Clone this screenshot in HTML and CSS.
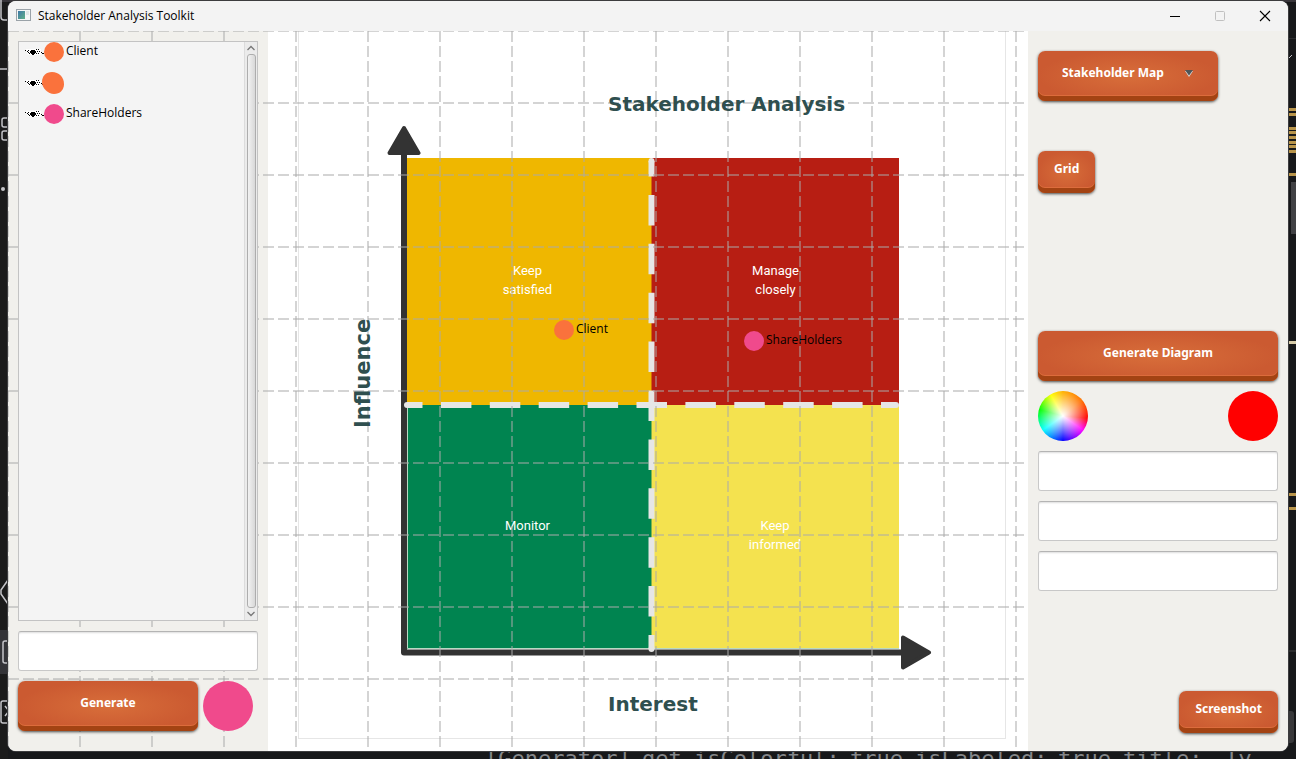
FILE: index.html
```html
<!DOCTYPE html>
<html lang="en">
<head>
<meta charset="utf-8">
<title>Stakeholder Analysis Toolkit</title>
<link rel="stylesheet" href="styles.css">
</head>
<body>
<svg class="backdrop" width="100%" height="100%" aria-hidden="true">
  <rect width="100%" height="100%" fill="#17181a"/>
  <rect width="8" height="100%" fill="#1b1b1b"/>
  <rect width="100%" height="2" fill="#38353a"/>
  <g fill="none" stroke="#c4c4c8" stroke-width="1.5">
    <path d="M1 0V17Q1 20 4 20H8M0 69H8"/>
    <rect x="2" y="118" width="9" height="9" rx="2"/>
    <rect x="2" y="131" width="9" height="9" rx="2"/>
    <path d="M8 580L1 590V594L8 604"/>
  </g>
  <circle cx="3" cy="189" r="2" fill="#c4c4c8"/>
  <rect y="630" width="8" height="44" fill="#343438"/>
  <g fill="none" stroke="#c4c4c8" stroke-width="1.5">
    <rect x="3" y="641" width="9" height="22" rx="2"/>
    <rect x="1" y="701" width="12" height="22" rx="2"/>
    <path d="M5 706L9 711L5 716"/>
  </g>
  <svg x="100%" overflow="visible">
    <g fill="#b8944a">
      <path d="M-8 108h8v3h-8zM-8 113h8v3h-8zM-8 127h8v3h-8zM-8 131h8v3h-8zM-8 136h8v3h-8zM-8 141h8v3h-8zM-8 145h8v3h-8zM-8 150h8v3h-8zM-8 173h8v3h-8zM-8 493h8v3h-8zM-8 507h8v3h-8z"/>
    </g>
    <path d="M-8 341h8v3h-8z" fill="#d6cba8"/>
    <path d="M-5 182h5v52h-5z" fill="#414144"/>
    <path d="M-8 38h8v1h-8zM-8 650h8v2h-8z" fill="#2c2c2e"/>
    <rect x="-10" y="711" width="8" height="32" rx="3" fill="#38383a"/>
    <path d="M-8 57l1 1l3-3" fill="none" stroke="#c4c4c8"/>
  </svg>
  <g class="console">
    <text x="485" y="766">[Generator]</text>
    <text x="642" y="766">get</text>
    <text x="694" y="766">isColorful:</text>
    <text x="850" y="766">true</text>
    <text x="915" y="766">isLabeled:</text>
    <text x="1058" y="766">true</text>
    <text x="1123" y="766">title:</text>
    <text x="1225" y="766">Ty</text>
  </g>
</svg>

<main class="window">
  <header class="titlebar">
    <svg class="app-icon" width="16" height="12" viewBox="0 0 16 12" aria-hidden="true">
      <defs><linearGradient id="appTint" x1="0" y1="0" x2="1" y2="1"><stop offset="0" stop-color="#3f78a8"/><stop offset="1" stop-color="#5fb087"/></linearGradient></defs>
      <rect x=".5" y=".5" width="14" height="11" fill="#f4f6f6" stroke="#9aa2a8"/>
      <rect x="2" y="2" width="7" height="8" fill="url(#appTint)"/>
      <rect x="10" y="2" width="3" height="4" fill="#dfe6e6"/>
    </svg>
    <h1 class="window-title">Stakeholder Analysis Toolkit</h1>
    <div class="window-buttons">
      <button class="window-button" aria-label="Minimize"><svg width="12" height="12" viewBox="0 0 12 12"><path d="M1 6.5H11" stroke="#000"/></svg></button>
      <button class="window-button" aria-label="Maximize" disabled><svg width="12" height="12" viewBox="0 0 12 12"><rect x="1.5" y="1.5" width="9" height="9" rx="1" fill="none" stroke="#c0c0c0"/></svg></button>
      <button class="window-button" aria-label="Close"><svg width="12" height="12" viewBox="0 0 12 12"><path d="M1 1L11 11M11 1L1 11" stroke="#000" stroke-width="1.1"/></svg></button>
    </div>
  </header>

  <div class="workspace">
    <svg class="grid-lines" width="100%" height="100%" aria-hidden="true">
      <g class="grid-h">
        <line x2="100%" y1="0" y2="0"/><line x2="100%" y1="72" y2="72"/><line x2="100%" y1="144" y2="144"/><line x2="100%" y1="216" y2="216"/><line x2="100%" y1="288" y2="288"/><line x2="100%" y1="360" y2="360"/><line x2="100%" y1="432" y2="432"/><line x2="100%" y1="504" y2="504"/><line x2="100%" y1="576" y2="576"/><line x2="100%" y1="648" y2="648"/>
      </g>
      <g class="grid-v">
        <line y2="100%" x1="0" x2="0"/><line y2="100%" x1="72" x2="72"/><line y2="100%" x1="144" x2="144"/><line y2="100%" x1="216" x2="216"/><line y2="100%" x1="288" x2="288"/><line y2="100%" x1="360" x2="360"/><line y2="100%" x1="432" x2="432"/><line y2="100%" x1="504" x2="504"/><line y2="100%" x1="576" x2="576"/><line y2="100%" x1="648" x2="648"/><line y2="100%" x1="720" x2="720"/><line y2="100%" x1="792" x2="792"/><line y2="100%" x1="864" x2="864"/><line y2="100%" x1="936" x2="936"/><line y2="100%" x1="1008" x2="1008"/>
      </g>
    </svg>

    <aside class="panel panel-left">
      <div class="list">
        <svg width="0" height="0" class="symbols" aria-hidden="true">
          <symbol id="eye" viewBox="0 0 19 10">
            <path fill="#fff" d="M1 2h15v6H3z"/>
            <path fill="#000" d="M0 3h1v1H0zM2 4h1v1H2zM3 3h1v1H3zM3 5h1v1H3zM4 6h1v1H4zM5 4h1v2H5zM6 3h4v4H6zM7 7h2v1H7zM10 4h1v2h-1zM11 2h1v1h-1zM12 4h1v1h-1zM11 6h1v1h-1zM13 2h1v1h-1zM13 6h1v1h-1zM14 4h1v1h-1zM16 5h1v1h-1zM17 6h2v1h-2z"/>
          </symbol>
        </svg>
        <ul class="items">
          <li class="item"><svg class="eye"><use href="#eye"/></svg><span class="dot orange"></span><span>Client</span></li>
          <li class="item"><svg class="eye"><use href="#eye"/></svg><svg class="blob" viewBox="0 0 22 22"><path d="M10 0C17 0 22 5 22 12C22 18 18 22 12 22C6 22 0 16 0 10C0 4 4 0 10 0Z" fill="#fa723c"/></svg></li>
          <li class="item"><svg class="eye"><use href="#eye"/></svg><span class="dot pink"></span><span>ShareHolders</span></li>
        </ul>
        <div class="scrollbar">
          <svg width="10" height="12" viewBox="0 0 10 12"><path d="M1.500 8L5 4.500L8.500 8" fill="none" stroke="#777" stroke-width="1.3"/></svg>
          <div class="thumb"></div>
          <svg width="10" height="12" viewBox="0 0 10 12"><path d="M1.500 4L5 7.500L8.500 4" fill="none" stroke="#777" stroke-width="1.3"/></svg>
        </div>
      </div>
      <input class="field" type="text" aria-label="Stakeholder name">
      <div class="generate-row">
        <button class="button button-tall button-generate">Generate</button>
        <span class="swatch pink"></span>
      </div>
    </aside>

    <section class="canvas" aria-label="Diagram">
      <svg class="diagram" viewBox="0 0 760 720">
        <rect x="30.500" y="-.5" width="707" height="708" fill="none" stroke="#e6e6e6"/>
        <rect x="139" y="127" width="245" height="247" fill="#efb700"/>
        <rect x="383.500" y="127" width="247.500" height="247" fill="#b71e13"/>
        <rect x="139" y="374" width="245" height="244" fill="#008450"/>
        <rect x="383.500" y="374" width="247.500" height="244" fill="#f4e24f"/>
        <path d="M139.500 377V617.500H631" fill="none" stroke="#b9d9c4"/>
        <path d="M136 115V621.500H640" fill="none" stroke="#333" stroke-width="6" stroke-linejoin="round"/>
        <path d="M136 97L150.500 122H121.500ZM661 621.500L635 606.500V636.500Z" fill="#333" stroke="#333" stroke-width="4" stroke-linejoin="round"/>
        <g stroke="#e6e6e6" stroke-width="6" stroke-dasharray="30.500 18.400" stroke-dashoffset="12">
          <path d="M383.500 130V618" stroke-dashoffset="15"/>
          <path d="M139 374H628" stroke-dashoffset="15"/>
        </g>
        <g fill="#e6e6e6"><circle cx="139" cy="374" r="3"/><circle cx="628" cy="374" r="3"/><circle cx="383.500" cy="130" r="3"/><circle cx="383.500" cy="618" r="3"/></g>
        <g class="quadrant-label">
          <text x="259.500" y="244">Keep</text><text x="259.500" y="263">satisfied</text>
          <text x="507.500" y="244">Manage</text><text x="507.500" y="263">closely</text>
          <text x="259.500" y="499">Monitor</text>
          <text x="507" y="499">Keep</text><text x="507" y="518">informed</text>
        </g>
      </svg>
      <svg class="diagram diagram-top" viewBox="0 0 760 720">
        <g class="axis-label">
          <text x="340" y="80">Stakeholder Analysis</text>
          <text x="340" y="680">Interest</text>
          <text class="axis-vertical" transform="translate(102 397) rotate(-90)">Influence</text>
        </g>
        <circle cx="296" cy="299" r="10" fill="#fa723c"/>
        <circle cx="486" cy="310" r="10" fill="#f04a8c"/>
        <g class="marker-label">
          <text x="308" y="302">Client</text>
          <text x="498" y="313">ShareHolders</text>
        </g>
      </svg>
    </section>

    <aside class="panel panel-right">
      <div class="view-options">
        <div class="map-picker">
          <select class="button button-tall map-select" aria-label="Diagram type"><option>Stakeholder Map</option></select>
          <svg class="map-arrow" width="10" height="7" viewBox="0 0 10 7"><path d="M1 1H9L5 7Z" fill="#ddd"/><path d="M1 0H9L5 5.500Z" fill="#4f5557"/></svg>
        </div>
        <button class="button button-grid">Grid</button>
      </div>
      <div class="diagram-form">
        <button class="button button-tall">Generate Diagram</button>
        <div class="color-row">
          <button class="swatch wheel" aria-label="Pick a colour"></button>
          <span class="swatch red"></span>
        </div>
        <input class="field" type="text" aria-label="Title">
        <input class="field" type="text" aria-label="Horizontal axis">
        <input class="field" type="text" aria-label="Vertical axis">
      </div>
      <button class="button button-shot">Screenshot</button>
    </aside>
  </div>
</main>
</body>
</html>
```

FILE: styles.css
```css
* {
  box-sizing: border-box;
}

body {
  margin: 0;
  height: 100vh;
  padding: 1px 8px 8px;
  background: #17181a;
  color: #000;
  font: 12px/16px "Open Sans", "Noto Sans", sans-serif;
  overflow: hidden;
}

.backdrop {
  position: absolute;
  left: 0;
  top: 0;
}

.console {
  fill: #85878a;
  font: 22px "DejaVu Sans Mono", monospace;
}

.window {
  position: relative;
  display: flex;
  flex-direction: column;
  height: 100%;
  border-radius: 8px;
  background: #fff;
  box-shadow: 0 0 0 1px #3c3c3e;
  overflow: hidden;
}

.titlebar {
  display: flex;
  align-items: center;
  flex: none;
  height: 30px;
  padding: 0 1px 0 8px;
  background: #f3f3f3;
}

.window-title {
  margin: 0 auto 0 6px;
  font-size: 12px;
  font-weight: 400;
}

.app-icon {
  margin-bottom: 2px;
}

.window-buttons {
  display: flex;
}

.window-button {
  display: grid;
  place-items: center;
  width: 45px;
  height: 28px;
  padding: 0;
  border: 0;
  background: none;
}

.workspace {
  position: relative;
  display: grid;
  grid-template-columns: 260px 1fr 260px;
  flex: 1;
  min-height: 0;
}

.grid-lines {
  position: absolute;
  inset: 0;
  z-index: 1;
  pointer-events: none;
}

.grid-lines line {
  stroke: #a9a9a9;
  stroke-opacity: 0.5;
  stroke-width: 2;
  stroke-dasharray: 11 4;
}

.panel {
  display: flex;
  flex-direction: column;
  min-height: 0;
  background: #f1f0ec;
}

.panel-left {
  gap: 10px;
  padding: 10px 10px 20px;
}

.panel-left > * {
  position: relative;
  z-index: 2;
}

.panel-right {
  position: relative;
  z-index: 2;
  justify-content: space-between;
  padding: 20px 10px 18px;
}

.list {
  display: flex;
  flex: 1;
  border: 1px solid #c3c3c3;
  background: #f4f4f4;
}

.symbols {
  position: absolute;
}

.items {
  display: flex;
  flex: 1;
  flex-direction: column;
  gap: 11px;
  margin: 0;
  padding: 0 0 0 6px;
  list-style: none;
}

.item {
  display: flex;
  align-items: center;
  height: 20px;
}

.item > span:last-child {
  padding: 0 0 2px 2px;
}

.eye {
  width: 19px;
  height: 10px;
}

.dot {
  width: 20px;
  height: 20px;
  border-radius: 50%;
}

.blob {
  width: 22px;
  height: 22px;
  margin-left: -2px;
}

.orange {
  background: #fa723c;
}

.pink {
  background: #f04a8c;
}

.red {
  background: #f00;
}

.scrollbar {
  display: flex;
  flex-direction: column;
  align-items: center;
  width: 13px;
  border-left: 1px solid #dcdcdc;
  background: #ebebeb;
}

.thumb {
  flex: 1;
  width: 9px;
  border: 1px solid #adadad;
  border-radius: 3px;
  background: linear-gradient(90deg, #f2f2f2, #d8d8d8);
}

.field {
  width: 100%;
  height: 40px;
  padding: 4px 8px;
  border: 1px solid #c8c8c8;
  border-top-color: #b4b4b4;
  border-radius: 3px;
  background: #fff;
  box-shadow: inset 0 2px 2px -1px #ddd;
  font: inherit;
}

.generate-row {
  display: flex;
  gap: 5px;
}

.swatch {
  width: 50px;
  height: 50px;
  padding: 0;
  border: 0;
  border-radius: 50%;
}

.wheel {
  background:
    radial-gradient(closest-side, #fff, rgba(255, 255, 255, 0)),
    conic-gradient(#ffb000, #ff7000 50deg, #f00 95deg, #f0f 125deg, #00f 180deg, #0ff 235deg, #0f0 285deg, #ff0 330deg, #ffb000);
}

.button {
  height: 42px;
  padding: 0 16px 7px;
  border: 0;
  border-radius: 7px;
  background: radial-gradient(ellipse closest-side, #d86e3a, #cb5a31);
  box-shadow: inset 0 -5px #a34313, inset 0 -6px #dc6c3c, 0 1px 3px rgba(0, 0, 0, 0.7);
  color: #fff;
  font: bold 12px/16px "Noto Sans", "Open Sans", sans-serif;
  text-align: center;
}

.button-tall {
  width: 100%;
  height: 50px;
}

.button-generate {
  width: 180px;
}

.view-options {
  display: flex;
  flex-direction: column;
  align-items: flex-start;
  gap: 50px;
}

.map-picker {
  position: relative;
  width: 180px;
}

.map-select {
  display: block;
  appearance: none;
  padding: 0 50px 7px 24px;
  text-align: left;
}

.map-arrow {
  position: absolute;
  right: 24px;
  top: 19px;
  pointer-events: none;
}

.button-shot {
  align-self: flex-end;
}

.diagram-form {
  display: flex;
  flex-direction: column;
  gap: 10px;
  margin-top: 38px;
}

.color-row {
  display: flex;
  justify-content: space-between;
}

.canvas {
  display: grid;
  min-height: 0;
}

.diagram {
  grid-area: 1 / 1;
  width: 100%;
  height: 100%;
}

.diagram-top {
  position: relative;
  z-index: 2;
}

.quadrant-label {
  fill: #fff;
  font: 13px Roboto, sans-serif;
  text-anchor: middle;
}

.axis-label {
  fill: #2f4f4f;
  font: bold 20px "DejaVu Sans", sans-serif;
}

.axis-vertical {
  font-size: 21px;
}

.marker-label {
  font: 12px "Open Sans", "Noto Sans", sans-serif;
}
```
